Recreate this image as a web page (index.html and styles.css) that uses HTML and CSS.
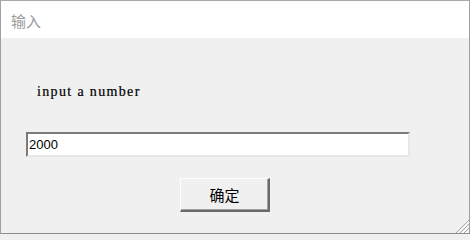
FILE: index.html
```html
<!DOCTYPE html>
<html>
<head>
<meta charset="utf-8">
<link rel="stylesheet" href="styles.css">
</head>
<body>
<div class="window">
  <div class="titlebar"><span class="title">输入</span></div>
  <div class="content">
    <div class="label">input a number</div>
    <div class="field"><span class="value">2000</span></div>
    <div class="actions"><div class="btn">确定</div></div>
    <svg class="grip" width="14" height="14" viewBox="0 0 14 14">
      <g stroke="#a8a8a8" stroke-width="1">
        <line x1="14" y1="1" x2="1" y2="14"/>
        <line x1="14" y1="5" x2="5" y2="14"/>
        <line x1="14" y1="9" x2="9" y2="14"/>
      </g>
      <g stroke="#ffffff" stroke-width="1">
        <line x1="14" y1="3" x2="3" y2="14"/>
        <line x1="14" y1="7" x2="7" y2="14"/>
        <line x1="14" y1="11" x2="11" y2="14"/>
      </g>
    </svg>
  </div>
</div>
</body>
</html>
```
FILE: styles.css
```css
html, body { margin: 0; padding: 0; background: #f0f0f0; }
.window {
  width: 470px; height: 234px; box-sizing: border-box;
  border-top: 1px solid #a8a8a8;
  border-left: 1px solid #9aa3ab;
  border-right: 1px solid #a0a0a0;
  border-bottom: 1px solid #8c8c8c;
  display: flex; flex-direction: column;
  position: relative;
  background: #f0f0f0;
}
.titlebar {
  height: 37px; background: #ffffff;
  display: flex; align-items: center;
  padding-left: 10px;
}
.title {
  font-family: "Noto Sans CJK SC", "Microsoft YaHei", sans-serif;
  font-size: 15px; color: #9a9a9a; line-height: 1; margin-top: 1px;
}
.content { flex: 1; position: relative; display: flex; flex-direction: column; }
.label {
  margin-top: 46px; margin-left: 36px;
  font-family: "Liberation Serif", "Times New Roman", serif;
  font-size: 14px; line-height: 16px; color: #000; font-weight: normal;
  letter-spacing: 1.35px;
  -webkit-text-stroke: 0.2px #000;
}
.field {
  margin-top: 32px; margin-left: 25px;
  width: 384px; height: 25px; box-sizing: border-box;
  background: #fff;
  border-top: 2px solid #7a7a7a;
  border-left: 2px solid #7a7a7a;
  border-right: 2px solid #e8e8e8;
  border-bottom: 2px solid #e8e8e8;
  display: flex; align-items: center; padding-left: 1px;
}
.value {
  font-family: "Liberation Sans", Arial, sans-serif; font-size: 13px; color: #000;
  line-height: 1;
}
.actions { display: flex; margin-top: 21px; padding-left: 179px; }
.btn {
  width: 90px; height: 34px; box-sizing: border-box;
  background: #f0f0f0;
  border-top: 1px solid #ffffff; border-left: 1px solid #ffffff;
  border-right: 2px solid #6a6a6a; border-bottom: 2px solid #6a6a6a;
  box-shadow: inset -1px -1px 0 #a0a0a0;
  display: flex; align-items: center; justify-content: center;
  font-family: "Noto Sans CJK SC", "Microsoft YaHei", sans-serif;
  font-size: 15px; color: #000; font-weight: normal;
}
.grip { position: absolute; right: 0; bottom: 0; }
```
